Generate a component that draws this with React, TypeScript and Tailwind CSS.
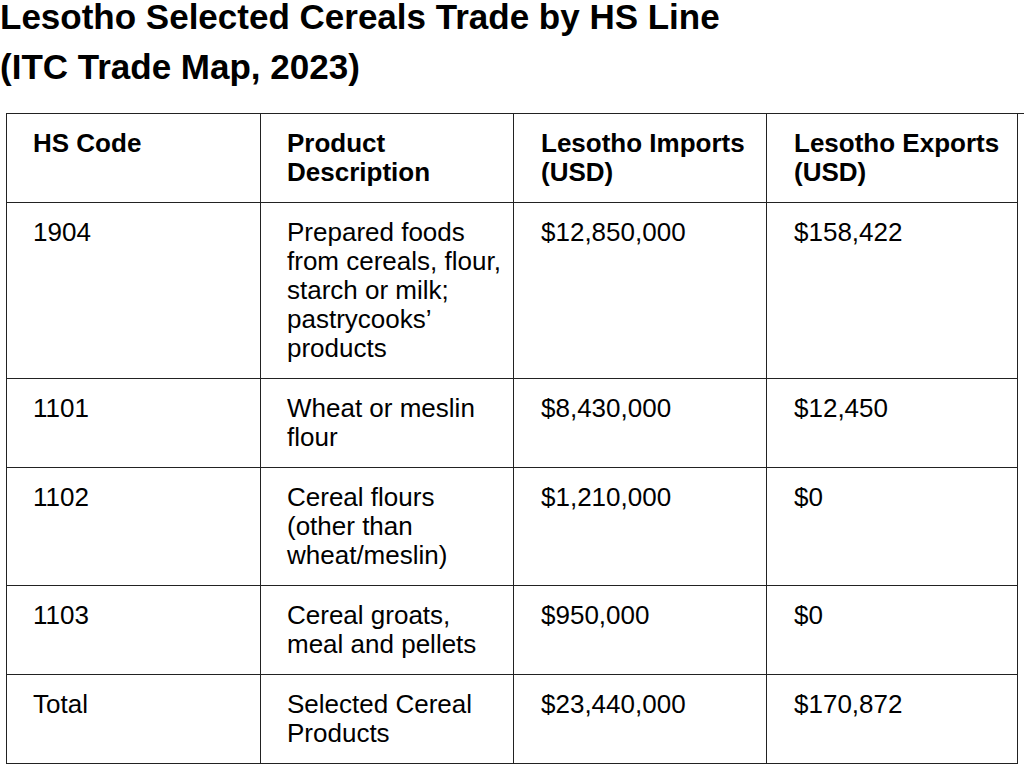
import React from "react";

const rows: [string, string, string, string][] = [
  ["1904", "Prepared foods from cereals, flour, starch or milk; pastrycooks\u2019 products", "$12,850,000", "$158,422"],
  ["1101", "Wheat or meslin flour", "$8,430,000", "$12,450"],
  ["1102", "Cereal flours (other than wheat/meslin)", "$1,210,000", "$0"],
  ["1103", "Cereal groats, meal and pellets", "$950,000", "$0"],
  ["Total", "Selected Cereal Products", "$23,440,000", "$170,872"],
];

const headers = ["HS Code", "Product Description", "Lesotho Imports (USD)", "Lesotho Exports (USD)"];

const cellBase = "border-r border-b border-[#222] pt-[15px] pb-[15px] pr-[8px]";
const padL = ["pl-[26px]", "pl-[26px]", "pl-[27px]", "pl-[27px]"];

export default function App() {
  return (
    <div
      className="w-[1024px] h-[770px] overflow-hidden bg-white text-black"
      style={{ fontFamily: '"Liberation Sans", Arial, Helvetica, sans-serif' }}
    >
      <h1 className="text-[35px] font-bold">
        <span className="block leading-[34px]">Lesotho Selected Cereals Trade by HS Line</span>
        <span className="block mt-[8px] leading-[50px]">(ITC Trade Map, 2023)</span>
      </h1>
      <div className="ml-[6px] mt-[21px] grid grid-cols-[254px_253px_253px_251px] border-l border-t border-[#222] text-[26px] leading-[29px]">
        {headers.map((h, i) => (
          <div key={h} className={`${cellBase} ${padL[i]} font-bold`}>
            {h}
          </div>
        ))}
        {rows.map((r) =>
          r.map((c, i) => (
            <div key={r[0] + i} className={`${cellBase} ${padL[i]}`}>
              {c}
            </div>
          ))
        )}
      </div>
    </div>
  );
}
